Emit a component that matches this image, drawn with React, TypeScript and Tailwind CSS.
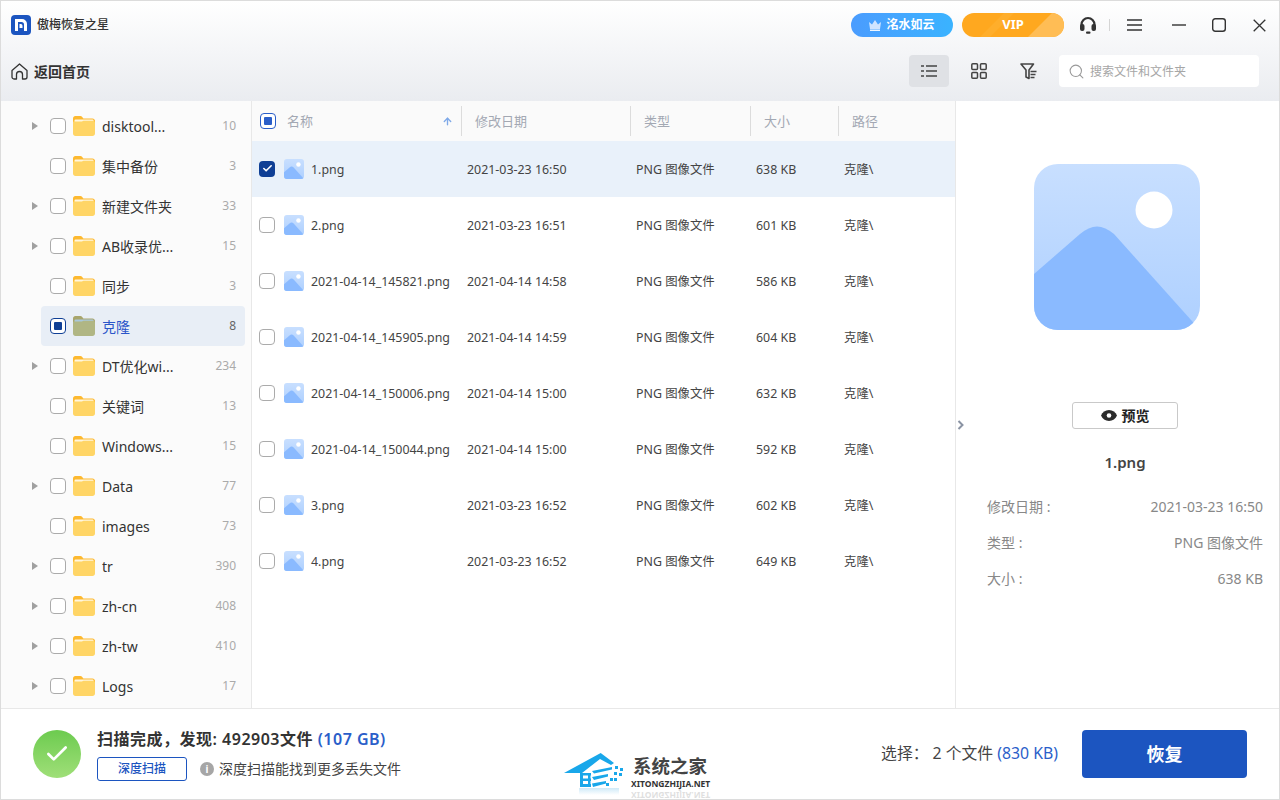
import { ArrowUp, Check, Search } from "lucide-react";

const folders = [
  { name: "disktool...", count: 10, arrow: true },
  { name: "集中备份", count: 3, arrow: false },
  { name: "新建文件夹", count: 33, arrow: true },
  { name: "AB收录优...", count: 15, arrow: true },
  { name: "同步", count: 3, arrow: false },
  { name: "克隆", count: 8, arrow: false, active: true },
  { name: "DT优化wi...", count: 234, arrow: true },
  { name: "关键词", count: 13, arrow: false },
  { name: "Windows...", count: 15, arrow: false },
  { name: "Data", count: 77, arrow: true },
  { name: "images", count: 73, arrow: false },
  { name: "tr", count: 390, arrow: true },
  { name: "zh-cn", count: 408, arrow: true },
  { name: "zh-tw", count: 410, arrow: true },
  { name: "Logs", count: 17, arrow: true },
];

const files = [
  { name: "1.png", date: "2021-03-23 16:50", size: "638 KB", selected: true },
  { name: "2.png", date: "2021-03-23 16:51", size: "601 KB" },
  { name: "2021-04-14_145821.png", date: "2021-04-14 14:58", size: "586 KB" },
  { name: "2021-04-14_145905.png", date: "2021-04-14 14:59", size: "604 KB" },
  { name: "2021-04-14_150006.png", date: "2021-04-14 15:00", size: "632 KB" },
  { name: "2021-04-14_150044.png", date: "2021-04-14 15:00", size: "592 KB" },
  { name: "3.png", date: "2021-03-23 16:52", size: "602 KB" },
  { name: "4.png", date: "2021-03-23 16:52", size: "649 KB" },
];

function Folder({ active }: { active?: boolean }) {
  return (
    <svg width="22" height="20" viewBox="0 0 22 20" className="shrink-0">
      <path d="M0 2.500C0 1.100 1 0 2.400 0h5c.8 0 1.300.3 1.800.9L10.400 2.400H19.500C20.900 2.400 22 3.500 22 4.900V8H0z" fill={active ? "#a8a56c" : "#fdb92f"} />
      <rect x="1.500" y="3.600" width="19" height="6" rx="1" fill={active ? "#a9c8dc" : "#fff6df"} />
      <path d="M0 6.500c0-.6.5-1 1-1h7.500c.7 0 1.100-.8 2-.8H20c1.100 0 2 .9 2 2V17.500C22 18.900 20.900 20 19.500 20h-17C1.100 20 0 18.900 0 17.500z" fill={active ? "#b0b684" : "#ffd566"} />
    </svg>
  );
}

function PictureIcon({ size }: { size: number }) {
  return (
    <svg width={size} height={size} viewBox="0 0 166 166" className="shrink-0">
      <defs>
        <linearGradient id="pic-bg" x1="0" y1="0" x2="0" y2="1">
          <stop offset="0" stopColor="#c8dfff" />
          <stop offset="1" stopColor="#aed0ff" />
        </linearGradient>
        <clipPath id="pic-clip">
          <rect width="166" height="166" rx="24" />
        </clipPath>
      </defs>
      <g clipPath="url(#pic-clip)">
        <rect width="166" height="166" fill="url(#pic-bg)" />
        <path d="M0 110L46 70C58 60 68 60 80 70L166 166H0z" fill="#8abaff" />
        <circle cx="120" cy="46" r="18.500" fill="#fff" />
      </g>
    </svg>
  );
}

function FolderCheckbox({ active }: { active?: boolean }) {
  if (active) {
    return (
      <span className="flex h-4 w-4 shrink-0 items-center justify-center rounded-[4px] border border-[#0f3f95] bg-white">
        <span className="h-2 w-2 rounded-[1px] bg-[#0f3f95]" />
      </span>
    );
  }
  return <span className="h-4 w-4 shrink-0 rounded-[4px] border border-[#ababab] bg-white" />;
}

function Sidebar() {
  return (
    <div className="w-[251px] shrink-0 overflow-hidden border-r border-[#e8e8e8] bg-[#fbfbfb] pt-[5px]">
      {folders.map((f) => (
        <div key={f.name} className="flex h-10 items-center">
          <div className="flex w-[40px] shrink-0 justify-end pr-[3px]">
            {f.arrow && (
              <svg width="6" height="8" viewBox="0 0 6 8">
                <path d="M0 0l6 4-6 4z" fill="#a0a0a0" />
              </svg>
            )}
          </div>
          <div className={`flex h-10 w-[204px] items-center rounded-[4px] pl-[9px] pr-[9px] ${f.active ? "bg-[#e8eef6]" : ""}`}>
            <FolderCheckbox active={f.active} />
            <span className="ml-[7px]">
              <Folder active={f.active} />
            </span>
            <span className={`ml-[7px] text-[14px] ${f.active ? "text-[#2a55c9]" : "text-[#333]"}`}>{f.name}</span>
            <span className={`ml-auto text-[12px] ${f.active ? "text-[#666]" : "text-[#aaa]"}`}>{f.count}</span>
          </div>
        </div>
      ))}
    </div>
  );
}

function FileTable() {
  return (
    <div className="flex min-w-0 flex-1 flex-col bg-white">
      <div className="grid h-10 shrink-0 grid-cols-[209px_169px_120px_88px_1fr] items-center bg-[#fafafa] text-[13px] text-[#a3a8b3]">
        <div className="flex items-center pl-2 pr-2">
          <span className="flex h-4 w-4 items-center justify-center rounded-[4px] border border-[#2a5ec9] bg-white">
            <span className="h-2 w-2 rounded-[1px] bg-[#2a5ec9]" />
          </span>
          <span className="ml-[11px] pt-[2px]">名称</span>
          <ArrowUp size={11} strokeWidth={3} className="ml-auto text-[#7fa9e8]" />
        </div>
        {["修改日期", "类型", "大小", "路径"].map((h) => (
          <div key={h} className="flex h-[30px] items-center border-l border-[#dcdcdc] pl-[13px] pt-[2px]">
            {h}
          </div>
        ))}
      </div>
      {files.map((f) => (
        <div
          key={f.name}
          className={`grid h-14 shrink-0 grid-cols-[215px_169px_120px_88px_1fr] items-center text-[12.400px] text-[#444] ${f.selected ? "bg-[#e9f1fa]" : ""}`}
        >
          <div className="flex items-center pl-[7px]">
            {f.selected ? (
              <span className="flex h-4 w-4 items-center justify-center rounded-[4px] bg-[#0f3f95]">
                <Check size={11} strokeWidth={3.5} className="text-white" />
              </span>
            ) : (
              <span className="h-4 w-4 rounded-[4px] border border-[#ababab] bg-white" />
            )}
            <span className="ml-[9px]">
              <PictureIcon size={20} />
            </span>
            <span className="ml-[7px] whitespace-nowrap pt-[2px]">{f.name}</span>
          </div>
          <div className="pt-[2px]">{f.date}</div>
          <div className="pt-[2px]">PNG 图像文件</div>
          <div className="pt-[2px]">{f.size}</div>
          <div className="pt-[2px]">克隆\</div>
        </div>
      ))}
    </div>
  );
}

function DetailPanel() {
  const rows = [
    ["修改日期 :", "2021-03-23 16:50"],
    ["类型 :", "PNG 图像文件"],
    ["大小 :", "638 KB"],
  ];
  return (
    <div className="relative flex w-[324px] shrink-0 flex-col items-center border-l border-[#e8e8e8] bg-white pl-[31px] pr-4 pt-[63px]">
      <span className="mr-4">
        <PictureIcon size={166} />
      </span>
      <button className="mt-[72px] flex h-[27px] w-[106px] items-center justify-center gap-[5px] rounded-[3px] border border-[#c9c9c9] text-[14px] font-semibold text-[#222]">
        <svg width="16" height="11" viewBox="0 0 16 11">
          <path d="M8 0C4.300 0 1.400 2.200 0 5.500 1.400 8.800 4.300 11 8 11s6.600-2.200 8-5.500C14.600 2.200 11.700 0 8 0z" fill="#2b2b2b" />
          <circle cx="8" cy="5.500" r="2.300" fill="#fff" />
        </svg>
        预览
      </button>
      <div className="mt-[23px] text-[15px] font-semibold leading-5 text-[#444]">1.png</div>
      <div className="mt-4 w-full text-[14px] text-[#888]">
        {rows.map(([k, v]) => (
          <div key={k} className="flex h-9 items-center justify-between">
            <span>{k}</span>
            <span>{v}</span>
          </div>
        ))}
      </div>
      <svg width="7" height="10" viewBox="0 0 7 10" className="absolute left-[1px] top-[319px]">
        <path d="M1.500 1L5.500 5 1.500 9" fill="none" stroke="#8a93a3" strokeWidth="2" />
      </svg>
    </div>
  );
}

function Watermark() {
  return (
    <div className="absolute left-[561px] top-[751px] flex items-start">
      <svg width="70" height="46" viewBox="0 0 70 46">
        <defs>
          <linearGradient id="wm-fade" x1="0" y1="0" x2="0" y2="1">
            <stop offset="0" stopColor="#cfeaf8" />
            <stop offset="1" stopColor="#ffffff" />
          </linearGradient>
        </defs>
        <rect x="17" y="36" width="40" height="7" fill="url(#wm-fade)" />
        <path d="M2 21L38.700 1 52 11 49 13 38 7 20 21z" fill="#19a7ea" />
        <path d="M18 21h3v14h-3zM21 21h8v2.500h-8zM21 26.500h8V29h-8zM21 32h8v3h-8zM26 23h2.500v10H26z" fill="#19a7ea" />
        <path d="M30 19l20-4v2.500L32 21.500zM30 25l16-3v2.500L32 28zM30 31.500l14-2.500v2.500L31 35z" fill="#19a7ea" />
        <g fill="#19a7ea">
          <rect x="53" y="14" width="3" height="3" />
          <rect x="58" y="16" width="3" height="3" />
          <rect x="52" y="20" width="3" height="3" />
          <rect x="57" y="21" width="3" height="3" />
          <rect x="48" y="26" width="3" height="3" />
          <rect x="52" y="26" width="3" height="3" />
          <rect x="44" y="31" width="3" height="3" />
        </g>
      </svg>
      <div className="ml-[1px] flex flex-col">
        <span className="mt-[3px] text-[18.500px] font-bold leading-[22px] text-[#444]">系统之家</span>
        <span className="-ml-[2px] mt-[1px] text-[8.500px] font-bold leading-3 text-[#333]">XITONGZHIJIA.NET</span>
        <span className="-ml-[2px] scale-y-[-1] text-[8.500px] font-bold leading-[10px] text-[#333] opacity-15">XITONGZHIJIA.NET</span>
      </div>
    </div>
  );
}

export default function App() {
  return (
    <div className="relative flex h-[800px] w-[1280px] flex-col overflow-hidden border border-[#dcdcdc] bg-white font-['Noto_Sans','Noto_Sans_CJK_SC',sans-serif]">
      <div className="flex h-[100px] shrink-0 flex-col bg-gradient-to-b from-[#ffffff] to-[#eaecf0]">
        <div className="flex h-[46px] items-center pl-[10px] pt-[2px]">
          <span className="flex h-5 w-5 items-center justify-center rounded-[4px] bg-[#1c55c0]">
            <svg width="20" height="20" viewBox="0 0 20 20">
              <path d="M4 4h7a5 5 0 0 1 5 5v7h-3V9.500A2.500 2.500 0 0 0 10.500 7H7v9H4z" fill="#fff" />
              <path d="M8.500 9h1.300A1.700 1.700 0 0 1 11.500 10.700V13h-3z" fill="#fff" />
            </svg>
          </span>
          <span className="ml-[6px] text-[12px] font-medium text-[#333]">傲梅恢复之星</span>
          <div className="ml-auto flex items-center">
            <div className="flex h-6 w-[102px] items-center justify-center gap-[5px] rounded-full bg-gradient-to-r from-[#4a9cfe] to-[#3ab3ff] text-[12px] font-semibold text-white">
              <svg width="12" height="11" viewBox="0 0 12 11">
                <path d="M0 2l3 2.500L6 0l3 4.500L12 2l-1 7H1z" fill="#cfe4ff" />
                <rect x="1" y="9.500" width="10" height="1.500" fill="#eef6ff" />
              </svg>
              洺水如云
            </div>
            <div className="relative ml-[9px] flex h-6 w-[102px] items-center justify-center overflow-hidden rounded-full bg-[#ffa81f] text-[13px] font-bold text-white">
              <svg width="102" height="24" viewBox="0 0 102 24" className="absolute inset-0">
                <path d="M18 24L42 0h10L28 24z" fill="#ffae2b" />
                <path d="M66 24L90 0h12v24z" fill="#ffbd55" />
              </svg>
              <span className="relative">VIP</span>
            </div>
            <svg width="18" height="18" viewBox="0 0 18 18" className="ml-[15px]">
              <path d="M2.500 10V8.500a6.500 6.500 0 0 1 13 0V10" fill="none" stroke="#333" strokeWidth="2.200" />
              <rect x="1" y="8" width="4.500" height="7" rx="2" fill="#333" />
              <rect x="12.500" y="8" width="4.500" height="7" rx="2" fill="#333" />
              <rect x="7" y="15.500" width="4.500" height="2.200" rx="1" fill="#333" />
            </svg>
            <span className="ml-[12px] h-3 w-px bg-[#d5d5d5]" />
            <svg width="15" height="12" viewBox="0 0 15 12" className="ml-[17px]">
              <path d="M0 1h15M0 6h15M0 11h15" stroke="#333" strokeWidth="1.300" />
            </svg>
            <svg width="14" height="2" viewBox="0 0 14 2" className="ml-[30px]">
              <path d="M0 1h14" stroke="#333" strokeWidth="1.400" />
            </svg>
            <svg width="14" height="14" viewBox="0 0 14 14" className="ml-[26px]">
              <rect x=".7" y=".7" width="12.600" height="12.600" rx="2.500" fill="none" stroke="#333" strokeWidth="1.400" />
            </svg>
            <svg width="13" height="13" viewBox="0 0 13 13" className="ml-[27px] mr-[13px]">
              <path d="M.7.7l11.600 11.600M12.300.7L.7 12.300" stroke="#333" strokeWidth="1.300" />
            </svg>
          </div>
        </div>
        <div className="flex flex-1 items-start pl-[10px] pr-5 pt-[8px]">
          <div className="flex h-8 items-center gap-[6px]">
            <svg width="17" height="17" viewBox="0 0 17 17">
              <path d="M1 7.500L8.500 1 16 7.500V14a2 2 0 0 1-2 2h-2.500v-4.500a3 3 0 0 0-6 0V16H3a2 2 0 0 1-2-2z" fill="none" stroke="#333" strokeWidth="1.300" strokeLinejoin="round" />
            </svg>
            <span className="text-[14px] font-semibold text-[#333]">返回首页</span>
          </div>
          <div className="ml-auto flex items-center">
            <span className="flex h-8 w-10 items-center justify-center rounded-[4px] bg-[#dfe1e5]">
              <svg width="16" height="12" viewBox="0 0 16 12">
                <path d="M0 1h3M5 1h11M0 6h3M5 6h11M0 11h3M5 11h11" stroke="#444" strokeWidth="1.600" />
              </svg>
            </span>
            <svg width="16" height="16" viewBox="0 0 16 16" className="ml-[22px]">
              <g fill="none" stroke="#444" strokeWidth="1.500">
                <rect x=".8" y=".8" width="5.700" height="5.700" rx="1" />
                <rect x="9.500" y=".8" width="5.700" height="5.700" rx="1" />
                <rect x=".8" y="9.500" width="5.700" height="5.700" rx="1" />
                <rect x="9.500" y="9.500" width="5.700" height="5.700" rx="1" />
              </g>
            </svg>
            <svg width="17" height="17" viewBox="0 0 17 17" className="ml-[33px]">
              <path d="M1 1h12.500L9 7v8.500L6 14V7z" fill="none" stroke="#444" strokeWidth="1.600" strokeLinejoin="round" />
              <path d="M10.500 8.500h6M10.500 11.500h5M10.500 14.500h4" stroke="#444" strokeWidth="1.400" />
            </svg>
            <div className="ml-[22px] flex h-8 w-[200px] items-center rounded-[4px] bg-white pl-[9px] text-[12px] text-[#a6a6a6]">
              <Search size={17} strokeWidth={1.5} className="text-[#999]" />
              <span className="ml-[5px] pt-[2px]">搜索文件和文件夹</span>
            </div>
          </div>
        </div>
      </div>

      <div className="flex min-h-0 flex-1">
        <Sidebar />
        <FileTable />
        <DetailPanel />
      </div>

      <div className="relative flex h-[91px] shrink-0 items-center border-t border-[#e8e8e8] bg-white pl-8 pr-8">
        <span className="flex h-12 w-12 items-center justify-center rounded-full bg-gradient-to-b from-[#6ccb4f] to-[#9fdf78]">
          <Check size={26} strokeWidth={2.5} className="text-white" />
        </span>
        <div className="ml-4 flex flex-col">
          <div className="text-[16px] font-semibold leading-[22px] tracking-[0.5px] text-[#333]">
            扫描完成，发现: 492903文件 <span className="text-[#2a5ec9]">(107 GB)</span>
          </div>
          <div className="mt-[7px] flex items-center">
            <span className="flex h-6 w-[90px] items-center justify-center rounded-[3px] border border-[#1c55c0] text-[12px] font-medium text-[#1c55c0]">深度扫描</span>
            <span className="ml-[13px] flex h-[14px] w-[14px] items-center justify-center rounded-full bg-[#a6a6a6] text-[10px] font-bold leading-none text-white">i</span>
            <span className="ml-[5px] text-[14px] text-[#444]">深度扫描能找到更多丢失文件</span>
          </div>
        </div>
        <div className="ml-auto text-[15.800px] text-[#444]">
          选择： 2 个文件 <span className="text-[#2a5ec9]">(830 KB)</span>
        </div>
        <button className="ml-6 h-12 w-[165px] rounded-[4px] bg-[#1c55c0] text-[18px] font-bold text-white">恢复</button>
      </div>
      <Watermark />
    </div>
  );
}
